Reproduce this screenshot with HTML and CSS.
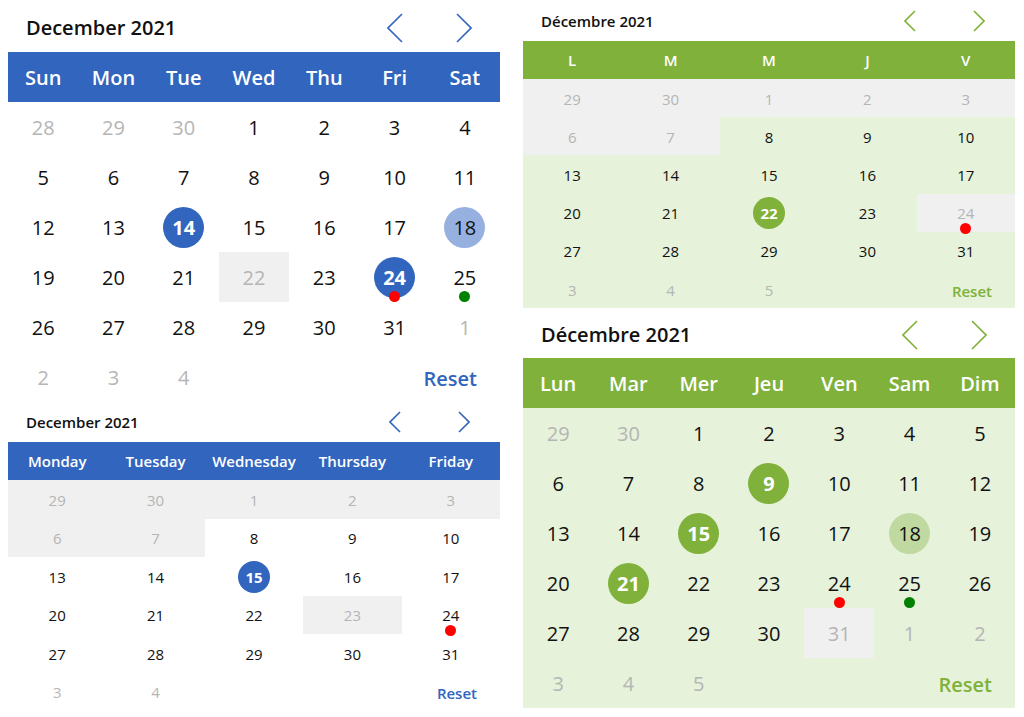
FILE: index.html
```html
<!DOCTYPE html>
<html lang="en">
<head>
  <meta charset="UTF-8" />
  <title>Calendars</title>
  <link rel="stylesheet" href="styles.css">
</head>
<body>
<div class="page">

  <div class="col">
    <!-- Calendar 1: blue, full week -->
    <section class="cal blue big">
      <div class="head">
        <span class="title">December 2021</span>
        <div class="nav">
          <button class="arrow"><svg viewBox="0 0 16 30"><path d="M15 1 L1 15 L15 29"/></svg></button>
          <button class="arrow"><svg viewBox="0 0 16 30"><path d="M1 1 L15 15 L1 29"/></svg></button>
        </div>
      </div>
      <div class="days seven">
        <span>Sun</span><span>Mon</span><span>Tue</span><span>Wed</span><span>Thu</span><span>Fri</span><span>Sat</span>
      </div>
      <div class="grid seven">
        <div class="cell out">28</div><div class="cell out">29</div><div class="cell out">30</div><div class="cell">1</div><div class="cell">2</div><div class="cell">3</div><div class="cell">4</div>
        <div class="cell">5</div><div class="cell">6</div><div class="cell">7</div><div class="cell">8</div><div class="cell">9</div><div class="cell">10</div><div class="cell">11</div>
        <div class="cell">12</div><div class="cell">13</div><div class="cell"><span class="sel">14</span></div><div class="cell">15</div><div class="cell">16</div><div class="cell">17</div><div class="cell"><span class="soft">18</span></div>
        <div class="cell">19</div><div class="cell">20</div><div class="cell">21</div><div class="cell off">22</div><div class="cell">23</div><div class="cell dot-red"><span class="sel">24</span></div><div class="cell dot-green">25</div>
        <div class="cell">26</div><div class="cell">27</div><div class="cell">28</div><div class="cell">29</div><div class="cell">30</div><div class="cell">31</div><div class="cell out">1</div>
        <div class="cell out">2</div><div class="cell out">3</div><div class="cell out">4</div><div class="reset">Reset</div>
      </div>
    </section>

    <!-- Calendar 2: blue, work week -->
    <section class="cal blue small">
      <div class="head">
        <span class="title">December 2021</span>
        <div class="nav">
          <button class="arrow"><svg viewBox="0 0 12 22"><path d="M11 1 L1 11 L11 21"/></svg></button>
          <button class="arrow"><svg viewBox="0 0 12 22"><path d="M1 1 L11 11 L1 21"/></svg></button>
        </div>
      </div>
      <div class="days five">
        <span>Monday</span><span>Tuesday</span><span>Wednesday</span><span>Thursday</span><span>Friday</span>
      </div>
      <div class="grid five">
        <div class="cell off">29</div><div class="cell off">30</div><div class="cell off">1</div><div class="cell off">2</div><div class="cell off">3</div>
        <div class="cell off">6</div><div class="cell off">7</div><div class="cell">8</div><div class="cell">9</div><div class="cell">10</div>
        <div class="cell">13</div><div class="cell">14</div><div class="cell"><span class="sel">15</span></div><div class="cell">16</div><div class="cell">17</div>
        <div class="cell">20</div><div class="cell">21</div><div class="cell">22</div><div class="cell off">23</div><div class="cell dot-red">24</div>
        <div class="cell">27</div><div class="cell">28</div><div class="cell">29</div><div class="cell">30</div><div class="cell">31</div>
        <div class="cell out">3</div><div class="cell out">4</div><div class="reset">Reset</div>
      </div>
    </section>
  </div>

  <div class="col">
    <!-- Calendrier 3: vert, semaine de travail -->
    <section class="cal green small tight">
      <div class="head">
        <span class="title">Décembre 2021</span>
        <div class="nav">
          <button class="arrow"><svg viewBox="0 0 12 22"><path d="M11 1 L1 11 L11 21"/></svg></button>
          <button class="arrow"><svg viewBox="0 0 12 22"><path d="M1 1 L11 11 L1 21"/></svg></button>
        </div>
      </div>
      <div class="days five">
        <span>L</span><span>M</span><span>M</span><span>J</span><span>V</span>
      </div>
      <div class="grid five">
        <div class="cell off">29</div><div class="cell off">30</div><div class="cell off">1</div><div class="cell off">2</div><div class="cell off">3</div>
        <div class="cell off">6</div><div class="cell off">7</div><div class="cell">8</div><div class="cell">9</div><div class="cell">10</div>
        <div class="cell">13</div><div class="cell">14</div><div class="cell">15</div><div class="cell">16</div><div class="cell">17</div>
        <div class="cell">20</div><div class="cell">21</div><div class="cell"><span class="sel">22</span></div><div class="cell">23</div><div class="cell off dot-red">24</div>
        <div class="cell">27</div><div class="cell">28</div><div class="cell">29</div><div class="cell">30</div><div class="cell">31</div>
        <div class="cell out">3</div><div class="cell out">4</div><div class="cell out">5</div><div class="reset">Reset</div>
      </div>
    </section>

    <!-- Calendrier 4: vert, semaine complète -->
    <section class="cal green big">
      <div class="head">
        <span class="title">Décembre 2021</span>
        <div class="nav">
          <button class="arrow"><svg viewBox="0 0 16 30"><path d="M15 1 L1 15 L15 29"/></svg></button>
          <button class="arrow"><svg viewBox="0 0 16 30"><path d="M1 1 L15 15 L1 29"/></svg></button>
        </div>
      </div>
      <div class="days seven">
        <span>Lun</span><span>Mar</span><span>Mer</span><span>Jeu</span><span>Ven</span><span>Sam</span><span>Dim</span>
      </div>
      <div class="grid seven">
        <div class="cell out">29</div><div class="cell out">30</div><div class="cell">1</div><div class="cell">2</div><div class="cell">3</div><div class="cell">4</div><div class="cell">5</div>
        <div class="cell">6</div><div class="cell">7</div><div class="cell">8</div><div class="cell"><span class="sel">9</span></div><div class="cell">10</div><div class="cell">11</div><div class="cell">12</div>
        <div class="cell">13</div><div class="cell">14</div><div class="cell"><span class="sel">15</span></div><div class="cell">16</div><div class="cell">17</div><div class="cell"><span class="soft">18</span></div><div class="cell">19</div>
        <div class="cell">20</div><div class="cell"><span class="sel">21</span></div><div class="cell">22</div><div class="cell">23</div><div class="cell dot-red">24</div><div class="cell dot-green">25</div><div class="cell">26</div>
        <div class="cell">27</div><div class="cell">28</div><div class="cell">29</div><div class="cell">30</div><div class="cell off">31</div><div class="cell out">1</div><div class="cell out">2</div>
        <div class="cell out">3</div><div class="cell out">4</div><div class="cell out">5</div><div class="reset">Reset</div>
      </div>
    </section>
  </div>

</div>
</body>
</html>
```

FILE: styles.css
```css
body {
  margin: 0;
  font-family: "Open Sans", "Liberation Sans", sans-serif;
  background: #fff;
  color: #111;
}
.page {
  display: flex;
  gap: 23px;
  padding-left: 8px;
}
.col {
  width: 492px;
  display: flex;
  flex-direction: column;
}

/* colour themes */
.blue {
  --main: #3165be;
  --soft: #96b1e0;
  --body: #fff;
}
.green {
  --main: #7fb13b;
  --soft: #bfd9a0;
  --body: #e6f2d9;
}

/* sizes */
.big {
  --head: 52px;
  --bar: 50px;
  --row: 50px;
  --fs: 20px;
  --circle: 41px;
  --dot: 19px;
}
.small {
  --head: 40px;
  --bar: 38px;
  --row: 38.5px;
  --fs: 15px;
  --circle: 32px;
  --dot: 16px;
}
.small.tight {
  --head: 41px;
  --row: 38.2px;
}
.green.big {
  --head: 50px;
}

.head {
  height: var(--head);
  display: flex;
  align-items: center;
  justify-content: space-between;
  padding-left: 18px;
}
.big .head {
  padding-top: 3px;
  box-sizing: border-box;
}
.title {
  font-size: var(--fs);
  font-weight: 600;
  color: #111;
}
.nav {
  display: flex;
  gap: 29px;
  margin-right: 16px;
}
.arrow {
  width: 40px;
  height: 34px;
  padding: 0;
  border: none;
  background: none;
  display: flex;
  align-items: center;
  justify-content: center;
  cursor: pointer;
}
.big .arrow svg {
  width: 16px;
  height: 30px;
}
.small .arrow svg {
  width: 12px;
  height: 22px;
}
.arrow path {
  fill: none;
  stroke: var(--main);
  stroke-width: 1.6;
}

.days {
  height: var(--bar);
  background: var(--main);
  display: grid;
  align-items: center;
  text-align: center;
  color: #fff;
  font-size: var(--fs);
  font-weight: 600;
}
.seven {
  grid-template-columns: repeat(7, 1fr);
}
.five {
  grid-template-columns: repeat(5, 1fr);
}

.grid {
  display: grid;
  grid-auto-rows: var(--row);
  background: var(--body);
  font-size: var(--fs);
}
.cell {
  position: relative;
  display: flex;
  align-items: center;
  justify-content: center;
  padding-top: 1px;
}
.out {
  color: #b5b5b5;
}
.off {
  background: #f0f0f0;
  color: #b5b5b5;
}
.sel,
.soft {
  width: var(--circle);
  height: var(--circle);
  border-radius: 50%;
  display: flex;
  align-items: center;
  justify-content: center;
}
.sel {
  background: var(--main);
  color: #fff;
  font-weight: 700;
}
.soft {
  background: var(--soft);
}
.dot-red::after,
.dot-green::after {
  content: "";
  position: absolute;
  left: 50%;
  top: calc(50% + var(--dot));
  width: 11px;
  height: 11px;
  margin: -5.5px 0 0 -5.5px;
  border-radius: 50%;
  background: #f00;
}
.dot-green::after {
  background: #008000;
}
.reset {
  grid-column: -3 / -1;
  display: flex;
  align-items: center;
  justify-content: flex-end;
  padding: 3px 23px 0 0;
  color: var(--main);
  font-weight: 600;
}
```
